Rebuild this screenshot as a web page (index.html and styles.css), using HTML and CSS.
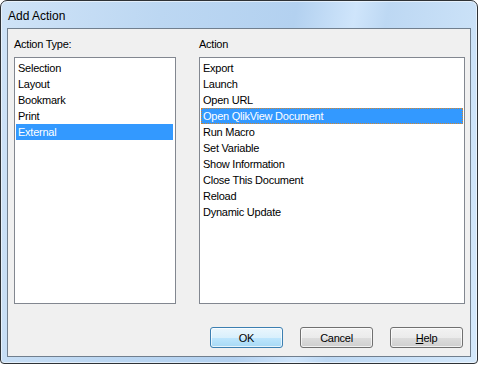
FILE: index.html
```html
<!DOCTYPE html>
<html>
<head>
<meta charset="utf-8">
<link rel="stylesheet" href="styles.css">
</head>
<body>
<div class="window">
  <div class="titlebar"><span class="title">Add Action</span></div>
  <div class="client">
    <div class="columns">
      <div class="col col-left">
        <div class="label">Action Type:</div>
        <div class="listbox">
          <div class="item">Selection</div>
          <div class="item">Layout</div>
          <div class="item">Bookmark</div>
          <div class="item">Print</div>
          <div class="item selected">External</div>
        </div>
      </div>
      <div class="col col-right">
        <div class="label">Action</div>
        <div class="listbox">
          <div class="item">Export</div>
          <div class="item">Launch</div>
          <div class="item">Open URL</div>
          <div class="item selected focused">Open QlikView Document</div>
          <div class="item">Run Macro</div>
          <div class="item">Set Variable</div>
          <div class="item">Show Information</div>
          <div class="item">Close This Document</div>
          <div class="item">Reload</div>
          <div class="item">Dynamic Update</div>
        </div>
      </div>
    </div>
    <div class="buttons">
      <div class="btn btn-default">OK</div>
      <div class="btn">Cancel</div>
      <div class="btn"><u>H</u>elp</div>
    </div>
  </div>
</div>
</body>
</html>
```

FILE: styles.css
```css
html, body {
  margin: 0;
  padding: 0;
  background: #ffffff;
}
body {
  width: 480px;
  height: 365px;
  overflow: hidden;
  font-family: "Liberation Sans", Arial, sans-serif;
  font-size: 11px;
  letter-spacing: -0.25px;
  color: #000;
}
.window {
  width: 478px;
  height: 364px;
  box-sizing: border-box;
  border: 1px solid #2e3236;
  border-radius: 7px 7px 4px 4px;
  background: linear-gradient(100deg, #cfe3f7 0%, #bcd7f2 30%, #b3d1f0 55%, #cfe5fb 66%, #bdd8f3 72%, #d4e8fb 100%);
  box-shadow: inset 0 0 0 1px rgba(255,255,255,0.55);
  display: flex;
  flex-direction: column;
  padding: 0 6px 6px 6px;
}
.titlebar {
  height: 28px;
  display: flex;
  align-items: center;
  padding-left: 1px;
  padding-top: 3px;
  box-sizing: border-box;
}
.title {
  font-size: 12px;
  letter-spacing: 0;
  color: #000;
}
.client {
  flex: 1;
  background: #f0f0f0;
  border: 1px solid #717f8e;
  display: flex;
  flex-direction: column;
  padding: 8px 5px 8px 6px;
}
.columns {
  display: flex;
  gap: 23px;
}
.col-left { width: 162px; }
.col-right { width: 266px; }
.label {
  height: 14px;
  line-height: 14px;
  margin-bottom: 6px;
}
.listbox {
  height: 247px;
  box-sizing: border-box;
  border: 1px solid #828790;
  background: #fff;
  padding: 2px 1px 1px 1px;
}
.item {
  height: 16px;
  line-height: 16px;
  padding-left: 2px;
  white-space: nowrap;
}
.col-left .item.selected {
  margin-right: 1px;
}
.item.selected {
  background: #3399ff;
  color: #fff;
}
.item.focused {
  outline: 1px dotted #d4862e;
  outline-offset: -1px;
}
.buttons {
  display: flex;
  justify-content: flex-end;
  gap: 17px;
  margin-top: 23px;
  padding-right: 2px;
}
.btn {
  width: 73px;
  height: 21px;
  box-sizing: border-box;
  border: 1px solid #707070;
  border-radius: 3px;
  background: linear-gradient(#f2f2f2 0%, #ebebeb 50%, #dddddd 51%, #cfcfcf 100%);
  box-shadow: inset 0 0 0 1px rgba(255,255,255,0.7);
  display: flex;
  align-items: center;
  justify-content: center;
}
.btn-default {
  border-color: #3c7fb1;
  background: linear-gradient(#eaf6fd 0%, #d9f0fc 50%, #bee6fd 51%, #a7d9f5 100%);
}
.btn u {
  text-decoration: underline;
}
```
